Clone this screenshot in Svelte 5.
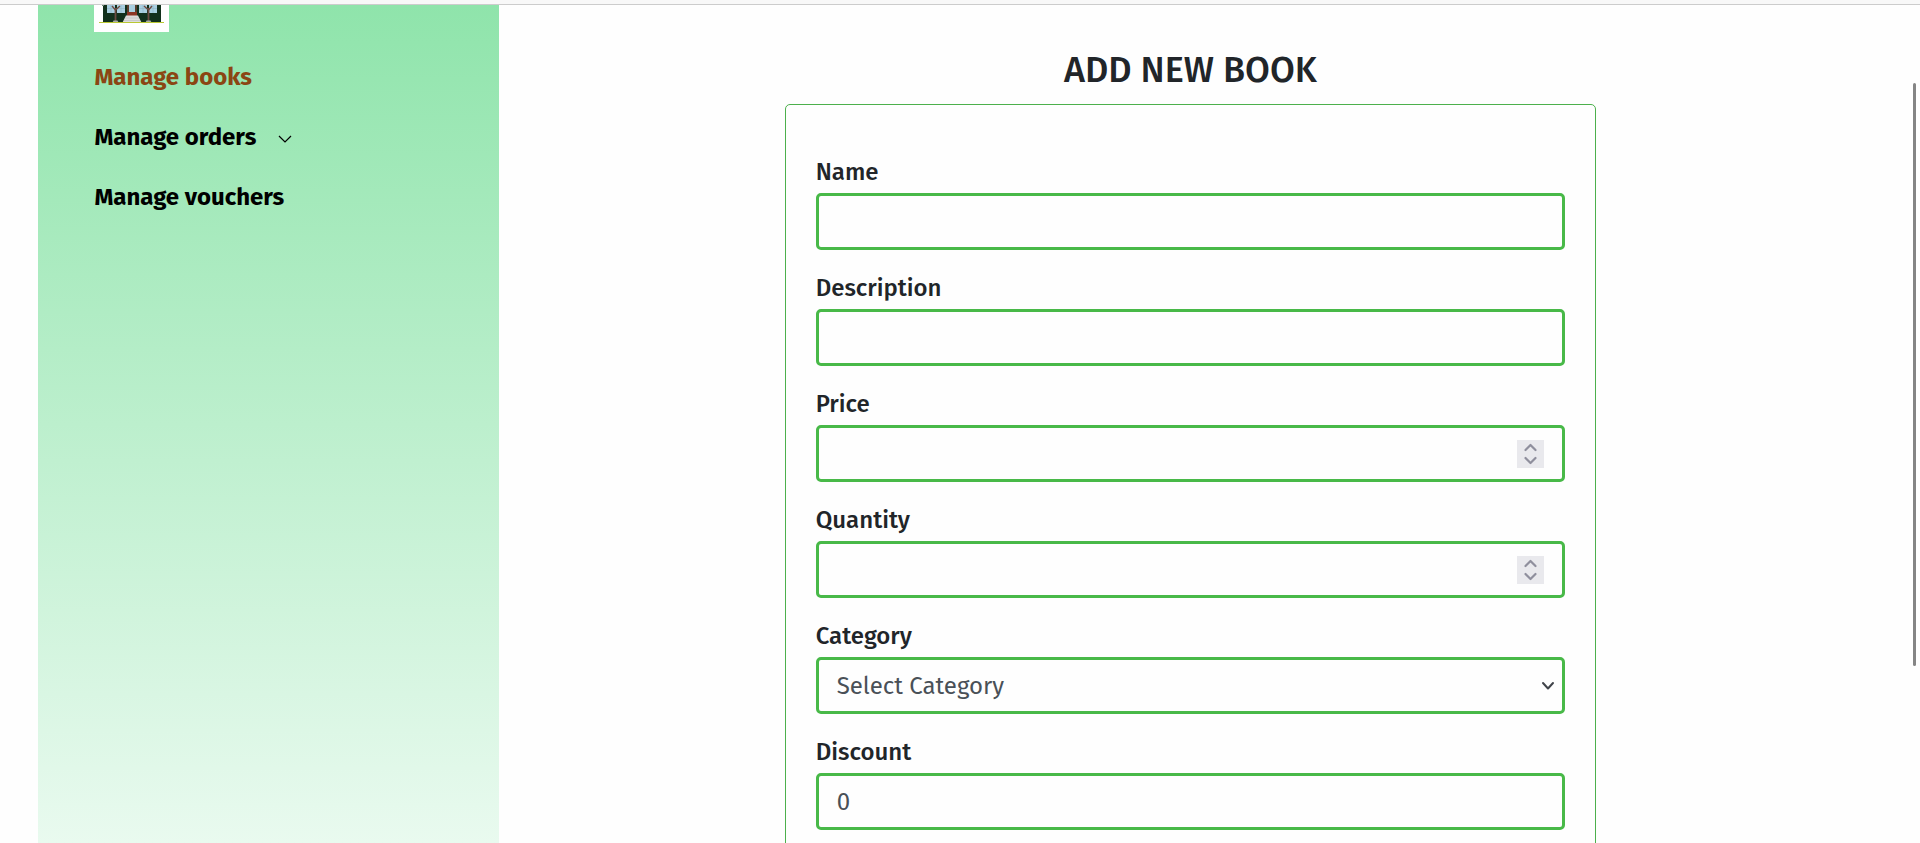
<script>
  let price = $state(null);
  let quantity = $state(null);
  let discount = $state('0');
  let category = $state('');
</script>

{#snippet spinner(name, step)}
  <span class="spinner">
    <button type="button" aria-label="Increase {name}" onclick={() => step(1)}>
      <svg viewBox="0 0 27 14" aria-hidden="true"><path d="M8.500 10l5-5 5 5" /></svg>
    </button>
    <button type="button" aria-label="Decrease {name}" onclick={() => step(-1)}>
      <svg viewBox="0 0 27 14" aria-hidden="true"><path d="M8.500 4l5 5 5-5" /></svg>
    </button>
  </span>
{/snippet}

<div class="page">
  <div class="topbar"></div>
  <div class="body">
    <aside>
      <svg class="logo" viewBox="0 0 75 27" aria-hidden="true">
        <rect width="75" height="27" fill="#fff" />
        <rect x="9" y="0" width="58" height="18" fill="#12301c" />
        <rect x="8" y="0" width="2" height="1" fill="#6f8a76" />
        <g fill="#a9cfe0">
          <rect x="13" y="0" width="8" height="8" />
          <rect x="23" y="0" width="8" height="8" />
          <rect x="45" y="0" width="8" height="8" />
          <rect x="55" y="0" width="8" height="8" />
          <rect x="35" y="0" width="6" height="7" />
        </g>
        <path d="M13 3.500h18M45 3.500h18M17 0v8M27 0v8M49 0v8M59 0v8" stroke="#8fb4c2" stroke-width=".6" />
        <path d="M34 0v9M42 0v9" stroke="#704334" stroke-width="1.500" />
        <rect x="33" y="7" width="10" height="4" fill="#8c3524" />
        <path d="M21.500 16V3M54.500 16V3" stroke="#6b4a40" stroke-width="1.800" />
        <path d="M18 1l3.500 4L26 1M50 1l4.500 4L58 1" stroke="#6d4a40" stroke-width="1.400" fill="none" />
        <path d="M18.500 17.500l1-2h4l1 2zM51.500 17.500l1-2h4l1 2z" fill="#a8aea8" />
        <path d="M32 10.500h12l3.500 7h-19z" fill="#dcdcdc" />
        <path d="M31 13h14M30 15.500h16" stroke="#bcbcbc" stroke-width=".6" />
        <rect x="5" y="17" width="65" height="1" fill="#b9c832" />
      </svg>
      <nav>
        <a class="active" href="#books">Manage books</a>
        <a href="#orders">Manage orders
          <svg viewBox="0 0 14 14" aria-hidden="true"><path d="M1 4l6 6 6-6" /></svg>
        </a>
        <a href="#vouchers">Manage vouchers</a>
      </nav>
    </aside>

    <main>
      <h1>ADD NEW BOOK</h1>
      <form>
        <div class="field">
          <label for="name">Name</label>
          <div class="control"><input id="name" type="text" /></div>
        </div>
        <div class="field">
          <label for="description">Description</label>
          <div class="control"><input id="description" type="text" /></div>
        </div>
        <div class="field">
          <label for="price">Price</label>
          <div class="control">
            <input id="price" type="number" bind:value={price} />
            {@render spinner('price', (n) => (price = (price ?? 0) + n))}
          </div>
        </div>
        <div class="field">
          <label for="quantity">Quantity</label>
          <div class="control">
            <input id="quantity" type="number" bind:value={quantity} />
            {@render spinner('quantity', (n) => (quantity = (quantity ?? 0) + n))}
          </div>
        </div>
        <div class="field">
          <label for="category">Category</label>
          <div class="control">
            <select id="category" bind:value={category}>
              <option value="">Select Category</option>
            </select>
            <svg class="caret" viewBox="0 0 14 14" aria-hidden="true"><path d="M2 4l5 5.500L12 4" /></svg>
          </div>
        </div>
        <div class="field">
          <label for="discount">Discount</label>
          <div class="control"><input id="discount" type="text" bind:value={discount} /></div>
        </div>
      </form>
    </main>
  </div>
  <div class="scroll-thumb"></div>
</div>

<style>
  :global(body) {
    background: #fefefe;
  }
  .page {
    display: flex;
    flex-direction: column;
    height: 100vh;
    overflow: hidden;
    font-family: 'Fira Sans', 'Noto Sans', sans-serif;
    color: #212529;
  }
  .page * {
    box-sizing: border-box;
  }
  .topbar {
    flex: none;
    height: 5px;
    background: #f8f8f8;
    border-bottom: 1px solid #ccc;
  }
  .body {
    flex: 1;
    min-height: 0;
    display: flex;
    padding: 0 2%;
  }
  aside {
    width: 25%;
    padding: 0 56px;
    background: linear-gradient(#8fe4ab, #e9faef);
  }
  .logo {
    display: block;
    width: 75px;
    height: 27px;
  }
  nav {
    display: flex;
    flex-direction: column;
    gap: 24px;
    padding-top: 27px;
  }
  nav a {
    display: flex;
    align-items: center;
    gap: 22px;
    font-size: 24px;
    line-height: 36px;
    font-weight: 700;
    color: #000;
    text-decoration: none;
    white-space: nowrap;
  }
  nav a.active {
    color: #8b4513;
  }
  nav svg {
    width: 14px;
    height: 14px;
    margin-top: 4px;
    fill: none;
    stroke: #000;
    stroke-width: 1.2;
  }
  main {
    flex: 1;
    display: flex;
    flex-direction: column;
    align-items: center;
    padding-top: 43px;
  }
  h1 {
    margin: 0 0 12px;
    font-size: 36px;
    line-height: 44px;
    font-weight: 500;
  }
  form {
    flex: none;
    display: flex;
    flex-direction: column;
    gap: 20px;
    width: 58.7%;
    padding: 49px 30px;
    border: 1px solid #4cb04c;
    border-radius: 5px;
    background: #fefefe;
  }
  label {
    display: block;
    height: 39px;
    font-size: 24px;
    line-height: 36px;
    font-weight: 500;
  }
  .control {
    position: relative;
    display: flex;
    align-items: center;
    height: 57px;
    border: 3px solid #48b948;
    border-radius: 5px;
  }
  input,
  select {
    flex: 1;
    min-width: 0;
    height: 100%;
    margin: 0;
    padding: 0 18px;
    border: 0;
    outline: 0;
    background: transparent;
    font: 400 24px/36px 'Fira Sans', 'Noto Sans', sans-serif;
    color: #495057;
    appearance: none;
  }
  input[type='number'] {
    appearance: textfield;
  }
  .control:focus-within {
    box-shadow: 0 0 0 3px #bfe8bf;
  }
  .spinner {
    display: flex;
    flex-direction: column;
    width: 27px;
    margin-right: 18px;
    background: #e9e9ed;
  }
  .spinner button {
    height: 14px;
    padding: 0;
    border: 0;
    background: none;
  }
  .spinner svg {
    display: block;
    fill: none;
    stroke: #8f8f9d;
    stroke-width: 2.2;
    stroke-linecap: round;
    stroke-linejoin: round;
  }
  .caret {
    position: absolute;
    right: 7px;
    width: 14px;
    height: 14px;
    fill: none;
    stroke: #40444a;
    stroke-width: 2;
    stroke-linecap: round;
    stroke-linejoin: round;
    pointer-events: none;
  }
  .scroll-thumb {
    position: fixed;
    top: 83px;
    right: 4px;
    width: 3px;
    height: 583px;
    border-radius: 2px;
    background: #858585;
  }
</style>
